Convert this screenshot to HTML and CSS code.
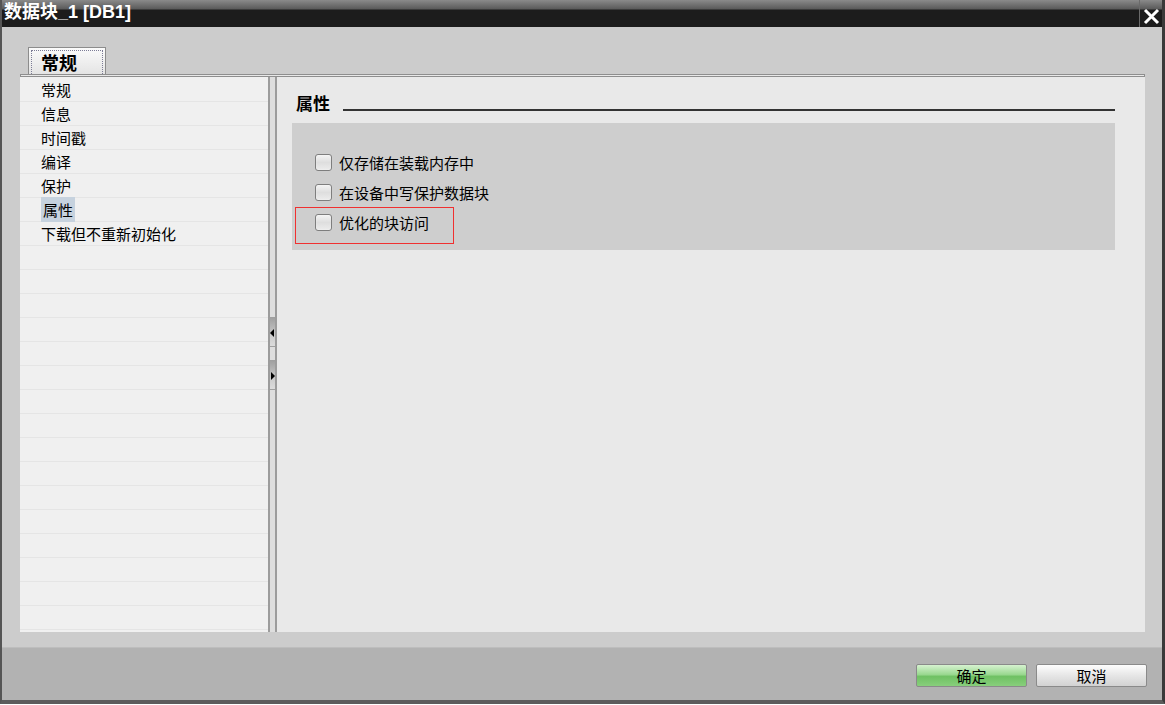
FILE: index.html
```html
<!DOCTYPE html>
<html lang="zh">

<head>
    <meta charset="UTF-8">
    <meta name="viewport" content="width=device-width, initial-scale=1.0">
    <title>数据块_1 [DB1]</title>
    <link rel="stylesheet" href="styles.css">
</head>

<body>
    <div class="window">
        <div class="titlebar">
            <div class="title">数据块_1 [DB1]</div>
            <button class="close">
                <svg width="17" height="17" viewBox="0 0 17 17">
                    <path d="M2 2 L15 15 M15 2 L2 15" stroke="#fff" stroke-width="3" />
                </svg>
            </button>
        </div>

        <div class="main">
            <div class="tabbar">
                <div class="tab"><span>常规</span></div>
            </div>
            <div class="tabline"></div>

            <div class="panes">
                <ul class="nav">
                    <li>常规</li>
                    <li>信息</li>
                    <li>时间戳</li>
                    <li>编译</li>
                    <li>保护</li>
                    <li><span class="selected">属性</span></li>
                    <li>下载但不重新初始化</li>
                </ul>

                <div class="splitter">
                    <div class="split-btn left"></div>
                    <div class="split-btn right"></div>
                </div>

                <div class="content">
                    <div class="heading">
                        <h2>属性</h2>
                        <div class="rule"></div>
                    </div>
                    <div class="group">
                        <label class="check"><span class="box"></span>仅存储在装载内存中</label>
                        <label class="check"><span class="box"></span>在设备中写保护数据块</label>
                        <label class="check"><span class="box"></span>优化的块访问</label>
                        <div class="mark"></div>
                    </div>
                </div>
            </div>
        </div>

        <div class="footer">
            <button class="btn ok">确定</button>
            <button class="btn">取消</button>
        </div>
    </div>
</body>

</html>
```

FILE: styles.css
```css
* {
    margin: 0;
    padding: 0;
    box-sizing: border-box;
}

body {
    background-color: #ffffff;
    font-family: "Noto Sans CJK SC", "Liberation Sans", sans-serif;
    font-size: 15px;
    color: #000;
}

.window {
    width: 1165px;
    height: 704px;
    display: flex;
    flex-direction: column;
    border-left: 2px solid #555;
    border-right: 3px solid #3a3a3a;
    border-bottom: 4px solid #5c5c5c;
    background-color: #cccccc;
}

.titlebar {
    height: 27px;
    display: flex;
    justify-content: space-between;
    background: linear-gradient(#8a8a8a 0, #5a5a5a 9px, #1c1c1c 10px, #1c1c1c 100%);
}

.title {
    padding-left: 2px;
    color: #fff;
    font-family: "Liberation Sans", "Noto Sans CJK SC", sans-serif;
    font-weight: bold;
    font-size: 18px;
    line-height: 25px;
}

.close {
    width: 23px;
    border: none;
    border-left: 1px solid #6a6a6a;
    background: transparent;
    display: flex;
    align-items: flex-end;
    justify-content: center;
    padding-bottom: 2px;
}

.main {
    flex: 1;
    display: flex;
    flex-direction: column;
    padding: 0 17px 15px 18px;
}

.tabbar {
    height: 47px;
    display: flex;
    align-items: flex-end;
    padding-left: 8px;
}

.tab {
    width: 78px;
    height: 27px;
    padding: 2px 2px 0 2px;
    border: 1px solid #8c8c8c;
    border-bottom: none;
    background: linear-gradient(#fbfbfb, #e4e4e4);
}

.tab span {
    display: block;
    height: 100%;
    border: 1px dotted #7c7c96;
    border-bottom: none;
    font-weight: bold;
    font-size: 18px;
    line-height: 22px;
    padding-left: 9px;
}

.tabline {
    height: 3px;
    border: 1px solid #8e8e8e;
    background-color: #e8e8e8;
}

.panes {
    flex: 1;
    display: flex;
}

.nav {
    width: 248px;
    list-style: none;
    padding-top: 1px;
    background: repeating-linear-gradient(#f0f0f0 0, #f0f0f0 23px, #e5e5e5 23px, #e5e5e5 24px);
    background-position: 0 1px;
    background-color: #f0f0f0;
}

.nav li {
    height: 24px;
    line-height: 23px;
    padding-left: 21px;
}

.selected {
    background-color: #c6d2de;
    padding: 2px 2px;
}

.splitter {
    width: 9px;
    display: flex;
    flex-direction: column;
    border-left: 2px solid #9c9c9c;
    border-right: 2px solid #9c9c9c;
    background-color: #dedede;
}

.split-btn {
    height: 30px;
    margin-top: 13px;
    background: linear-gradient(#9e9e9e, #cfcfcf 70%, #dcdcdc);
    border-bottom: 1px solid #a0a0a0;
    position: relative;
}

.split-btn.left {
    margin-top: 240px;
}

.split-btn::after {
    content: "";
    position: absolute;
    top: 12px;
    left: 0;
    border-top: 4px solid transparent;
    border-bottom: 4px solid transparent;
}

.split-btn.left::after {
    border-right: 4px solid #000;
}

.split-btn.right::after {
    border-left: 4px solid #000;
    left: 1px;
}

.content {
    flex: 1;
    background-color: #e9e9e9;
    padding: 0 30px 0 15px;
}

.heading {
    margin-top: 16px;
    height: 20px;
    display: flex;
    align-items: flex-end;
    padding-left: 4px;
}

.heading h2 {
    font-size: 17px;
    font-weight: bold;
    line-height: 20px;
}

.rule {
    flex: 1;
    height: 2px;
    margin: 0 0 2px 13px;
    background-color: #333;
}

.group {
    position: relative;
    margin-top: 10px;
    padding: 24px 0 13px 23px;
    background-color: #cecece;
}

.check {
    height: 30px;
    display: flex;
    align-items: center;
    gap: 7px;
}

.box {
    width: 17px;
    height: 17px;
    border: 1px solid #7e7e7e;
    border-radius: 3px;
    background: linear-gradient(#f4f4f4, #dedede 50%, #ececec);
    box-shadow: inset 0 0 1px #fff;
}

.mark {
    position: absolute;
    left: 3px;
    top: 84px;
    width: 159px;
    height: 37px;
    border: 1px solid #f03030;
}

.footer {
    height: 53px;
    display: flex;
    justify-content: flex-end;
    gap: 9px;
    padding: 16px 15px 0 0;
    background-color: #b2b2b2;
    border-top: 1px solid #bdbdbd;
}

.btn {
    width: 111px;
    height: 23px;
    border: 1px solid #8a8a8a;
    border-radius: 2px;
    background: linear-gradient(#fdfdfd, #e6e6e6 50%, #d2d2d2);
    font-family: "Noto Sans CJK SC", "Liberation Sans", sans-serif;
    font-size: 15px;
    line-height: 20px;
}

.btn.ok {
    background: linear-gradient(#d6f2d0, #9ad890 45%, #6fc163 55%, #88cf7c);
}
```
